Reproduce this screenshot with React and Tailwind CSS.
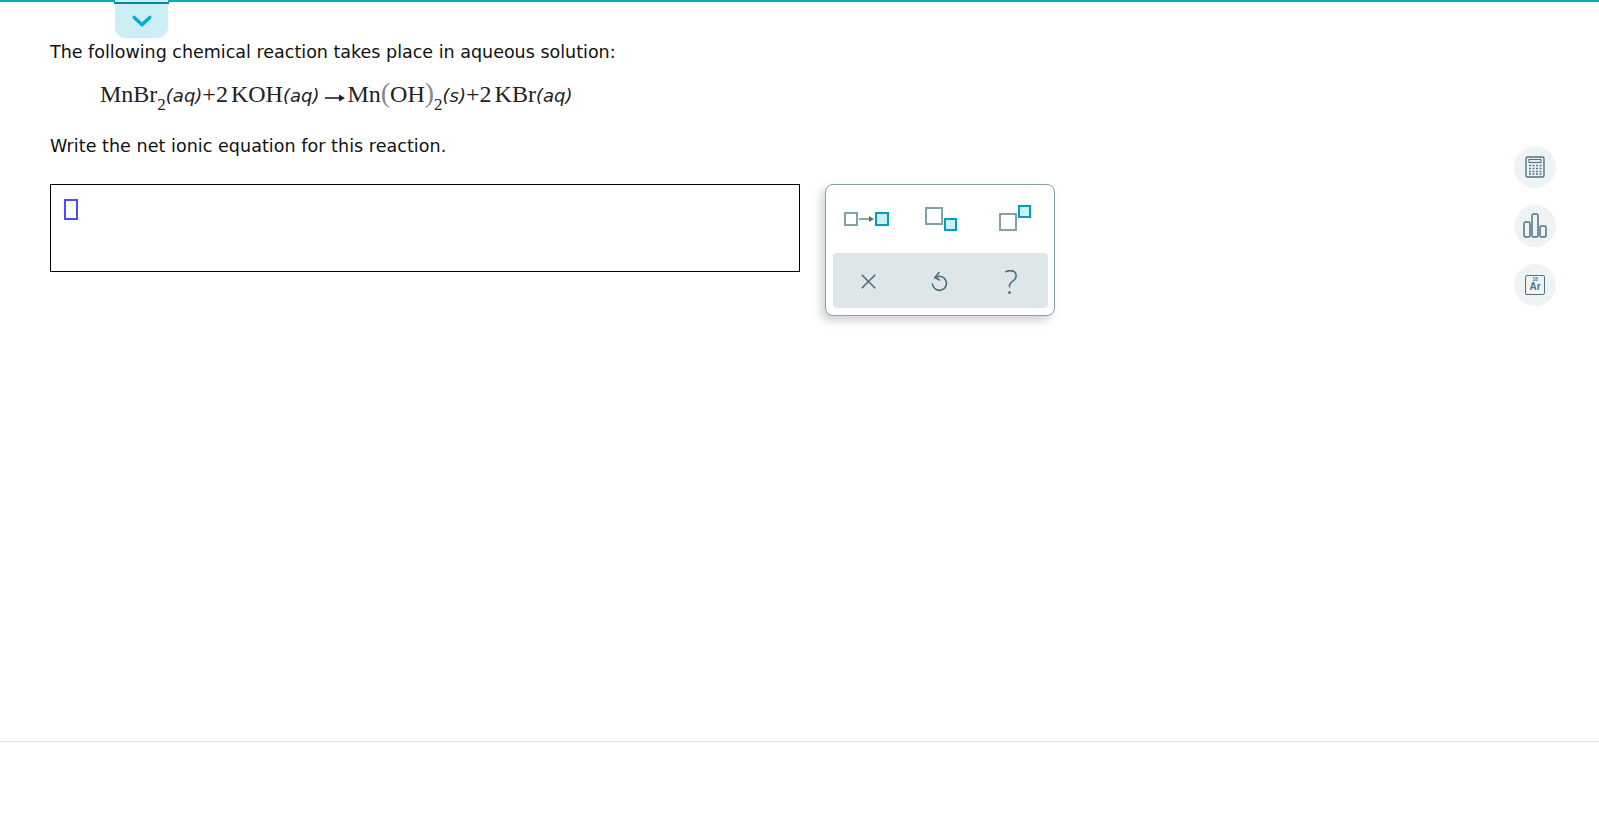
import React from "react";
import { X } from "lucide-react";

const serif = "font-['Liberation_Serif',serif]";

const Aq = ({ children }) => (
	<span className="italic font-['DejaVu_Sans',sans-serif] text-[18px]">{children}</span>
);

const Sub = ({ children }) => (
	<span className="text-[17px] align-[-8px] leading-none">{children}</span>
);

const Box = ({ className }) => (
	<span className={"block border-2 " + className}></span>
);

const ToolCircle = ({ children }) => (
	<div className="w-[42px] h-[42px] rounded-full bg-[#eff3f4] flex items-center justify-center">
		{children}
	</div>
);

const UndoIcon = () => (
	<svg width="20" height="24" viewBox="0 0 20 24" fill="none" stroke="#4a6c78" strokeWidth="1.6" strokeLinecap="round" strokeLinejoin="round">
		<path d="M6 8 A7 7 0 1 1 3.5 14" />
		<path d="M10 2.5 L6 7.5 L10.5 10" />
	</svg>
);

const App = () => {
	return (
		<div className="relative h-screen bg-white overflow-hidden font-['DejaVu_Sans',sans-serif] text-[#111]">
			<div className="h-[2px] bg-[#00a9c5]"></div>

			{/* collapse tab */}
			<div className="absolute left-[115px] top-0 w-[53px] h-[38px] bg-[#cceff5] rounded-b-[10px] flex justify-center pt-[15px]">
				<div className="absolute top-[2px] -left-[1px] -right-[1px] h-[2px] bg-[#008aa3]"></div>
				<svg width="20" height="13" viewBox="0 0 22 14" fill="none">
					<path d="M2.5 2.5 L11 10.5 L19.5 2.5" stroke="#00b0cc" strokeWidth="3.8" strokeLinecap="round" strokeLinejoin="round" />
				</svg>
			</div>

			<div className="flex justify-between pl-[50px] pr-[43px] h-[740px] border-b border-[#e3e3e3]">
				<div className="pt-[39px]">
					<p className="text-[17.5px] leading-[22px]">
						The following chemical reaction takes place in aqueous solution:
					</p>
					<p className={"ml-[50px] mt-[15px] h-[32px] whitespace-nowrap text-[24px] leading-[32px] text-[#222] " + serif}>
						MnBr<Sub>2</Sub>
						<Aq>(aq)</Aq>+2<span className="ml-[3px]">KOH</span>
						<Aq>(aq)</Aq>
						<span className="inline-block ml-[5px] mr-[1px] align-[-1px]">
							<svg width="22" height="10" viewBox="0 0 22 10">
								<path d="M1 5 H17" stroke="#222" strokeWidth="1.6" />
								<path d="M15 1.5 L21 5 L15 8.5 Z" fill="#222" />
							</svg>
						</span>
						Mn<span className="text-[#888] text-[28px] leading-none">(</span>OH<span className="text-[#888] text-[28px] leading-none">)</span>
						<Sub>2</Sub>
						<Aq>(s)</Aq>+2<span className="ml-[3px]">KBr</span>
						<Aq>(aq)</Aq>
					</p>
					<p className="mt-[25px] text-[17.5px] leading-[22px] tracking-[0.05px]">
						Write the net ionic equation for this reaction.
					</p>

					<div className="flex items-start gap-[25px] mt-[27px]">
						<div className="w-[750px] h-[88px] border border-black pl-[13px] pt-[14px]">
							<div className="w-[14px] h-[21px] border-2 border-[#4a4aff]"></div>
						</div>

						<div className="w-[230px] h-[132px] border border-[#84a0a8] rounded-[8px] bg-white shadow-[-4px_5px_8px_rgba(60,90,100,0.25)] pl-[7px] pr-[6px] pt-[7px]">
							<div className="h-[61px] flex">
								<div className="w-[78px] flex items-center gap-[1px] pl-[11px] pb-[7px]">
									<Box className="w-[14px] h-[14px] border-[#84a0a8]" />
									<svg width="15" height="8" viewBox="0 0 15 8">
										<path d="M0 4 H11" stroke="#4f7480" strokeWidth="1.3" />
										<path d="M10 1 L15 4 L10 7 Z" fill="#4f7480" />
									</svg>
									<Box className="w-[14px] h-[14px] border-[#00a0ba] bg-[#cceff5]" />
								</div>
								<div className="w-[72px] relative">
									<Box className="absolute left-[14px] top-[15px] w-[18px] h-[18px] border-[#84a0a8]" />
									<Box className="absolute left-[33px] top-[26px] w-[13px] h-[13px] border-[#00a0ba] bg-[#cceff5]" />
								</div>
								<div className="flex-1 relative">
									<Box className="absolute left-[16px] top-[21px] w-[18px] h-[18px] border-[#84a0a8]" />
									<Box className="absolute left-[35px] top-[13px] w-[13px] h-[13px] border-[#00a0ba] bg-[#cceff5]" />
								</div>
							</div>
							<div className="h-[55px] bg-[#dfe6e8] rounded-[4px] flex items-center pt-[2px] text-[#4a6c78]">
								<div className="w-[70px] flex justify-center">
									<X size={25} strokeWidth={1.6} />
								</div>
								<div className="w-[71px] flex justify-center">
									<UndoIcon />
								</div>
								<div className="flex-1 flex justify-center text-[33px] leading-none font-['Open_Sans',sans-serif] font-light">
									?
								</div>
							</div>
						</div>
					</div>
				</div>

				<div className="flex flex-col gap-[17px] pt-[144px]">
					<ToolCircle>
						<svg width="20" height="22" viewBox="0 0 20 22" fill="none" stroke="#4f7480">
							<rect x="1" y="1" width="18" height="20" rx="1.5" strokeWidth="1.4" />
							<rect x="4" y="3.5" width="12" height="3" strokeWidth="1.1" />
							<path d="M4 9.5h2M7.5 9.5h2M11 9.5h2M14.5 9.5h2M4 12.5h2M7.5 12.5h2M11 12.5h2M14.5 12.5h2M4 15.5h2M7.5 15.5h2M11 15.5h2M14.5 15.5h2M4 18h2M7.5 18h2M11 18h2M14.5 18h2" strokeWidth="1.6" />
						</svg>
					</ToolCircle>
					<ToolCircle>
						<svg width="24" height="26" viewBox="0 0 24 26" fill="none" stroke="#4f7480" strokeWidth="1.5">
							<rect x="1" y="9" width="6" height="15" rx="1.5" />
							<rect x="9" y="1" width="6" height="23" rx="1.5" />
							<rect x="17" y="13" width="6" height="11" rx="1.5" />
						</svg>
					</ToolCircle>
					<ToolCircle>
						<div className="w-[20px] h-[20px] border-[1.5px] border-[#4f7480] rounded-[2px] flex flex-col items-center text-[#4f7480] font-['Liberation_Sans',sans-serif] leading-none">
							<span className="text-[5px] font-bold mt-[1px]">18</span>
							<span className="text-[10px] font-bold">Ar</span>
						</div>
					</ToolCircle>
				</div>
			</div>
		</div>
	);
};

export default App;
